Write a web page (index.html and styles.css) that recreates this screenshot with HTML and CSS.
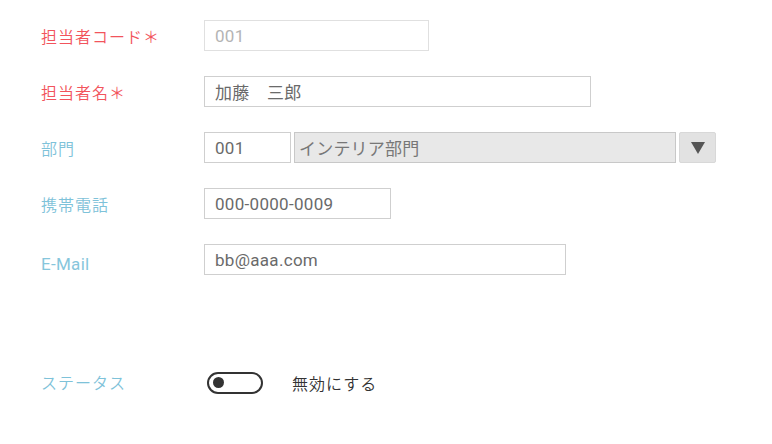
FILE: index.html
```html
<!DOCTYPE html>
<html lang="ja">
<head>
<meta charset="utf-8">
<link rel="stylesheet" href="styles.css">
</head>
<body>
<form class="form">
  <div class="row">
    <div class="label required">担当者コード＊</div>
    <div class="field"><div class="box disabled w-code">001</div></div>
  </div>
  <div class="row">
    <div class="label required">担当者名＊</div>
    <div class="field"><div class="box w-name">加藤　三郎</div></div>
  </div>
  <div class="row">
    <div class="label">部門</div>
    <div class="field combo">
      <div class="box w-dept-code">001</div>
      <div class="box readonly w-dept-name">インテリア部門</div>
      <div class="drop-btn"><svg width="14" height="12" viewBox="0 0 14 12"><path d="M0 0H14L7 12Z" fill="#555"/></svg></div>
    </div>
  </div>
  <div class="row">
    <div class="label">携帯電話</div>
    <div class="field"><div class="box w-tel">000-0000-0009</div></div>
  </div>
  <div class="row">
    <div class="label latin">E-Mail</div>
    <div class="field"><div class="box w-mail">bb@aaa.com</div></div>
  </div>
  <div class="row status">
    <div class="label">ステータス</div>
    <div class="field toggle-field">
      <span class="toggle"><span class="knob"></span></span>
      <span class="toggle-text">無効にする</span>
    </div>
  </div>
</form>
</body>
</html>
```
FILE: styles.css
```css
html, body {
  margin: 0;
  padding: 0;
  background: #fff;
}
body {
  font-family: "Noto Sans CJK JP", sans-serif;
  font-size: 17px;
  font-weight: 400;
}
.form {
  display: flex;
  flex-direction: column;
  gap: 25px;
  padding: 20px 0 0 41px;
}
.row {
  display: flex;
  align-items: center;
  height: 31px;
}
.row.status {
  margin-top: 67px;
}
.label {
  width: 163px;
  flex: none;
  color: #7ec2d9;
  font-size: 16px;
  font-weight: 350;
  letter-spacing: 1px;
  line-height: 1;
  padding-top: 1px;
}
.label.required {
  color: #f2545c;
}
.label.latin {
  font-family: "Roboto", "Noto Sans CJK JP", sans-serif;
  font-weight: 400;
  font-size: 17px;
  color: #86c6dc;
  letter-spacing: 0.3px;
  padding-top: 9px;
}
.status .label {
  padding-top: 0;
  margin-top: -2px;
}
.field {
  display: flex;
  align-items: center;
  height: 31px;
}
.combo {
  gap: 3px;
}
.box {
  box-sizing: border-box;
  height: 31px;
  border: 1px solid #cfcfcf;
  background: #fff;
  padding: 0 10px;
  display: flex;
  align-items: center;
  color: #6a6a6a;
  font-family: "Roboto", "Noto Sans CJK JP", sans-serif;
  font-size: 17px;
  letter-spacing: 0.3px;
}
.box.disabled {
  border-color: #e0e0e0;
  color: #b4b4b4;
}
.box.readonly {
  background: #e8e8e8;
  border-color: #c8c8c8;
  padding-left: 4px;
  letter-spacing: 0.2px;
  color: #777;
}
.w-code { width: 225px; }
.w-name { width: 387px; }
.w-dept-code { width: 87px; }
.w-dept-name { width: 382px; }
.w-tel { width: 187px; }
.w-mail { width: 362px; }
.drop-btn {
  box-sizing: border-box;
  width: 37px;
  height: 31px;
  background: #e2e2e2;
  border: 1px solid #d8d8d8;
  border-radius: 2px;
  display: flex;
  align-items: center;
  justify-content: center;
}
.toggle-field {
  gap: 29px;
  padding-left: 3px;
}
.toggle {
  box-sizing: border-box;
  width: 56px;
  height: 22px;
  border: 2px solid #333;
  border-radius: 11px;
  display: flex;
  align-items: center;
  padding-left: 4px;
}
.knob {
  width: 11px;
  height: 11px;
  border-radius: 50%;
  background: #333;
}
.toggle-text {
  color: #333;
  font-size: 16px;
  font-weight: 350;
  letter-spacing: 1px;
}
```
